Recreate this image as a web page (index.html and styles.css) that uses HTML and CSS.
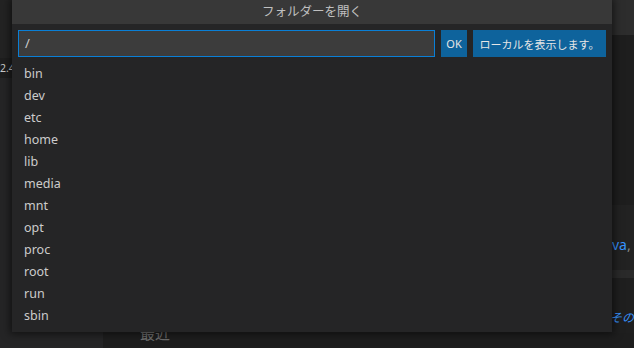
FILE: index.html
```html
<!DOCTYPE html>
<html lang="ja">
<head>
<meta charset="utf-8">
<title>フォルダーを開く</title>
<link rel="stylesheet" href="styles.css">
</head>
<body>
<div class="bg">
  <div class="side">
    <div class="side-top"></div>
    <div class="side-ver"><span>2.4</span></div>
  </div>
  <div class="main">
    <div class="main-head"></div>
    <div class="main-gap"></div>
    <div class="band-a"><span class="link">va</span><span class="comma">,</span></div>
    <div class="band-b"></div>
    <div class="band-c"><span class="link ital">その</span></div>
    <div class="band-d"><span class="recent">最近</span></div>
  </div>
</div>

<div class="dialog">
  <div class="title">フォルダーを開く</div>
  <div class="bar">
    <div class="input">/</div>
    <button class="btn btn-ok">OK</button>
    <button class="btn btn-local">ローカルを表示します。</button>
  </div>
  <ul class="list">
    <li>bin</li>
    <li>dev</li>
    <li>etc</li>
    <li>home</li>
    <li>lib</li>
    <li>media</li>
    <li>mnt</li>
    <li>opt</li>
    <li>proc</li>
    <li>root</li>
    <li>run</li>
    <li>sbin</li>
  </ul>
</div>
</body>
</html>
```

FILE: styles.css
```css
html, body {
  margin: 0;
  padding: 0;
}
body {
  width: 634px;
  height: 348px;
  overflow: hidden;
  position: relative;
  background: #1e1e1e;
  font-family: "Noto Sans", "Noto Sans CJK JP", sans-serif;
  color: #cccccc;
}

/* background workbench */
.bg {
  display: grid;
  grid-template-columns: 103px 1fr;
  height: 348px;
}
.side {
  background: #252526;
  display: flex;
  flex-direction: column;
  overflow: hidden;
}
.side-top {
  flex-shrink: 0;
  height: 58px;
  background: #232323;
}
.side-ver {
  flex-shrink: 0;
  height: 20px;
  background: #1e1e1e;
  font-size: 10.5px;
  line-height: 20px;
  white-space: nowrap;
}
.side-ver span {
  display: inline-block;
  margin-left: 0;
}
.main {
  display: flex;
  flex-direction: column;
  overflow: hidden;
}
.main > div {
  flex-shrink: 0;
  overflow: hidden;
  white-space: nowrap;
}
.main-head {
  height: 35px;
  background: #2d2d2d;
}
.main-gap {
  height: 170px;
  background: #1e1e1e;
}
.band-a {
  height: 65px;
  background: #222222;
  padding-left: 509px;
  font-size: 14px;
  line-height: 80px;
}
.band-b {
  height: 8px;
  background: #2a2a2a;
}
.band-c {
  height: 55px;
  background: #1f1f1f;
  padding-left: 507px;
  font-size: 12px;
  line-height: 80px;
}
.band-d {
  height: 15px;
  background: #1e1e1e;
  padding-left: 37px;
  font-size: 15px;
  line-height: 0;
}
.main > .band-d {
  overflow: visible;
}
.link {
  color: #3794ff;
}
.ital {
  font-style: italic;
}
.comma {
  color: #888888;
}
.recent {
  color: #6e6e6e;
}

/* dialog overlay */
.dialog {
  position: absolute;
  left: 12px;
  top: 0;
  width: 600px;
  background: #252526;
  box-shadow: 0 0 8px 2px rgba(0, 0, 0, 0.55);
}
.title {
  height: 24px;
  line-height: 24px;
  background: #383838;
  color: #c0c0c0;
  font-size: 12.5px;
  text-align: center;
}
.bar {
  display: flex;
  gap: 6px;
  padding: 6px 6px 0 6px;
  height: 27px;
}
.input {
  flex: 1;
  box-sizing: border-box;
  height: 27px;
  border: 1px solid #0a7fd6;
  background: #3c3c3c;
  color: #cccccc;
  font-size: 13px;
  line-height: 25px;
  padding-left: 6px;
}
.btn {
  box-sizing: border-box;
  height: 27px;
  border: none;
  margin: 0;
  background: #0e639c;
  color: #e6e6e6;
  font-family: "Noto Sans", "Noto Sans CJK JP", sans-serif;
  font-size: 11px;
  padding: 0;
}
.btn-ok {
  width: 26px;
}
.btn-local {
  width: 133px;
}
.list {
  list-style: none;
  margin: 0;
  padding: 6px 0 5px 12px;
}
.list li {
  height: 22px;
  line-height: 22px;
  font-size: 12.5px;
  color: #cccccc;
}
```
